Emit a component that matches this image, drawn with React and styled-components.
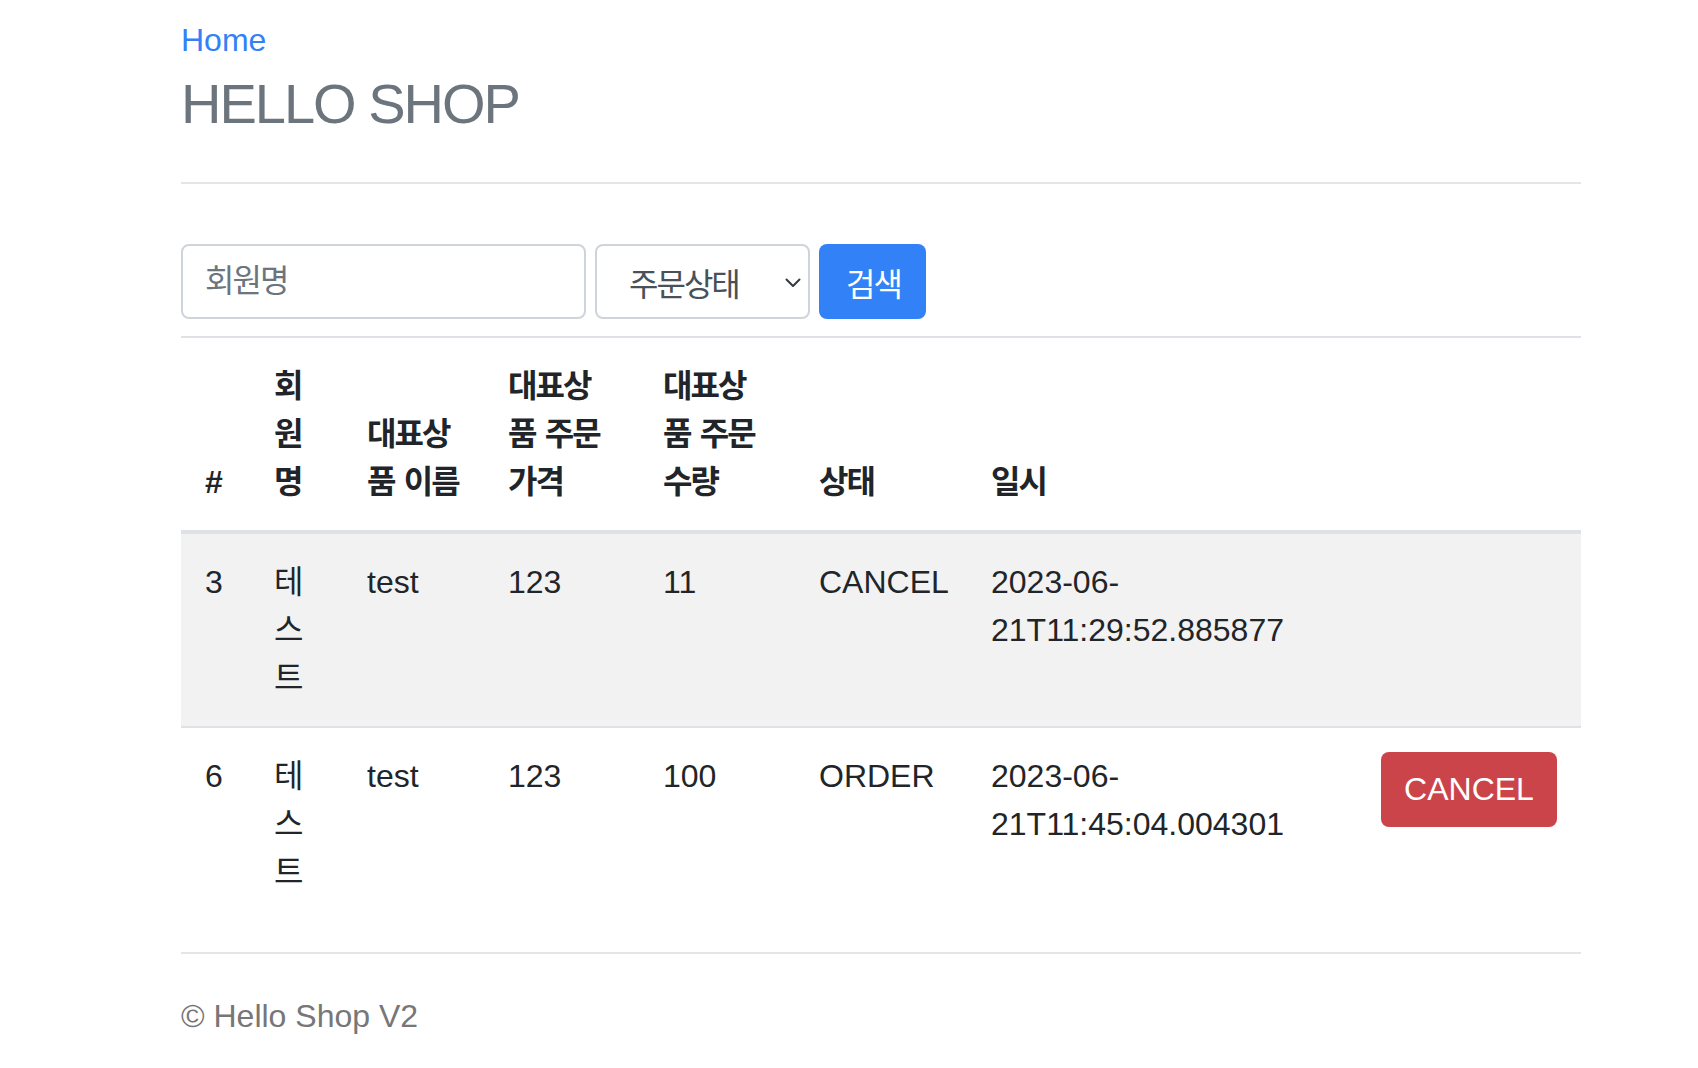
import React from "react";
import styled, { createGlobalStyle } from "styled-components";

const Global = createGlobalStyle`
  html, body { margin: 0; padding: 0; background: #fff; }
  body {
    font-family: "Liberation Sans", "Noto Sans CJK KR", Arial, sans-serif;
    font-size: 32px;
    line-height: 1.5;
    color: #212529;
  }
  * { box-sizing: border-box; }
`;

const Page = styled.div`
  width: 1400px;
  margin-left: 181px;
  padding-top: 16px;
`;

const Header = styled.header`
  border-bottom: 2px solid #e5e5e5;
`;

const NavLink = styled.a`
  display: inline-block;
  color: #3381f6;
  text-decoration: none;
  line-height: 48px;
`;

const Title = styled.h3`
  margin: 6px 0 45px;
  font-size: 56px;
  font-weight: 400;
  line-height: 1.2;
  letter-spacing: -2px;
  color: #6c757d;
`;

const Ko = styled.span`
  font-family: "Noto Sans CJK KR", sans-serif;
  font-size: 32px;
  line-height: 1;
  letter-spacing: -2px;
  word-spacing: 4px;
`;

const SearchForm = styled.form`
  display: flex;
  gap: 9px;
  margin: 60px 0 17px;
`;

const TextInput = styled.input`
  width: 405px;
  height: 75px;
  border: 2px solid #ced4da;
  border-radius: 8px;
  padding: 0 22px;
  font-family: "Liberation Sans", "Noto Sans CJK KR", sans-serif;
  font-size: 32px;
  color: #495057;
  outline: none;
  &::placeholder {
    color: #6c757d;
    font-family: "Noto Sans CJK KR", sans-serif;
    font-size: 32px;
    letter-spacing: -2px;
  }
`;

const SelectWrap = styled.div`
  position: relative;
  width: 215px;
  height: 75px;
`;

const Select = styled.select`
  appearance: none;
  -webkit-appearance: none;
  width: 100%;
  height: 100%;
  border: 2px solid #ced4da;
  border-radius: 8px;
  background: #fff;
  padding: 0 40px 0 32px;
  font-family: "Noto Sans CJK KR", sans-serif;
  font-size: 32px;
  letter-spacing: -2px;
  color: #495057;
  outline: none;
`;

const Chevron = styled.svg`
  position: absolute;
  right: 9px;
  top: 50%;
  width: 16px;
  height: 10px;
  margin-top: -4px;
  pointer-events: none;
`;

const SearchButton = styled.button`
  width: 107px;
  height: 75px;
  border: none;
  border-radius: 8px;
  background: #3381f6;
  color: #fff;
  font-family: "Noto Sans CJK KR", sans-serif;
  font-size: 32px;
  letter-spacing: -2px;
  padding: 0 0 0 2px;
`;

const Table = styled.table`
  width: 1400px;
  border-collapse: collapse;
  table-layout: fixed;
  margin-bottom: 32px;
`;

const Th = styled.th`
  padding: 24px;
  border-top: 2px solid #dee2e6;
  border-bottom: 4px solid #dee2e6;
  text-align: left;
  vertical-align: bottom;
  font-weight: 700;
  white-space: nowrap;
`;

const Tr = styled.tr`
  background: ${(p) => (p.$striped ? "#f2f2f2" : "transparent")};
`;

const Td = styled.td`
  padding: 24px;
  border-top: 2px solid #dee2e6;
  vertical-align: top;
  text-align: left;
`;

const CancelButton = styled.button`
  width: 176px;
  height: 75px;
  border: none;
  border-radius: 8px;
  background: #cb444a;
  color: #fff;
  font-family: "Liberation Sans", sans-serif;
  font-size: 32px;
  padding: 0;
`;

const Footer = styled.footer`
  border-top: 2px solid #e5e5e5;
  padding-top: 38px;
  color: #777;
`;

const cols = [69, 93, 141, 155, 156, 172, 390, 224];

const headers = [
  { latin: "#" },
  { lines: ["회", "원", "명"] },
  { lines: ["대표상", "품 이름"] },
  { lines: ["대표상", "품 주문", "가격"] },
  { lines: ["대표상", "품 주문", "수량"] },
  { lines: ["상태"] },
  { lines: ["일시"] },
  { lines: [""] },
];

const orders = [
  { id: 3, name: "테스트", item: "test", price: 123, count: 11, status: "CANCEL", date: "2023-06-21T11:29:52.885877" },
  { id: 6, name: "테스트", item: "test", price: 123, count: 100, status: "ORDER", date: "2023-06-21T11:45:04.004301" },
];

function HeaderCell({ h }) {
  if (h.latin) return <Th>{h.latin}</Th>;
  return (
    <Th>
      <Ko>
        {h.lines.map((l, i) => (
          <React.Fragment key={i}>
            {i > 0 && <br />}
            {l}
          </React.Fragment>
        ))}
      </Ko>
    </Th>
  );
}

export default function App() {
  return (
    <>
      <Global />
      <Page>
        <Header>
          <NavLink href="#">Home</NavLink>
          <Title>HELLO SHOP</Title>
        </Header>

        <SearchForm onSubmit={(e) => e.preventDefault()}>
          <TextInput placeholder="회원명" />
          <SelectWrap>
            <Select defaultValue="">
              <option value="">주문상태</option>
              <option value="ORDER">ORDER</option>
              <option value="CANCEL">CANCEL</option>
            </Select>
            <Chevron viewBox="0 0 16 10">
              <path d="M1.5 1.5 L8 8 L14.5 1.5" fill="none" stroke="#343a40" strokeWidth="2" strokeLinecap="round" strokeLinejoin="round" />
            </Chevron>
          </SelectWrap>
          <SearchButton type="submit">검색</SearchButton>
        </SearchForm>

        <Table>
          <colgroup>
            {cols.map((w, i) => (
              <col key={i} style={{ width: w }} />
            ))}
          </colgroup>
          <thead>
            <tr>
              {headers.map((h, i) => (
                <HeaderCell key={i} h={h} />
              ))}
            </tr>
          </thead>
          <tbody>
            {orders.map((o, i) => (
              <Tr key={o.id} $striped={i % 2 === 0}>
                <Td>{o.id}</Td>
                <Td>
                  <Ko>{o.name}</Ko>
                </Td>
                <Td>{o.item}</Td>
                <Td>{o.price}</Td>
                <Td>{o.count}</Td>
                <Td>{o.status}</Td>
                <Td>
                  {o.date.slice(0, 8)}
                  <wbr />
                  {o.date.slice(8)}
                </Td>
                <Td>{o.status === "ORDER" && <CancelButton type="button">CANCEL</CancelButton>}</Td>
              </Tr>
            ))}
          </tbody>
        </Table>

        <Footer>© Hello Shop V2</Footer>
      </Page>
    </>
  );
}
